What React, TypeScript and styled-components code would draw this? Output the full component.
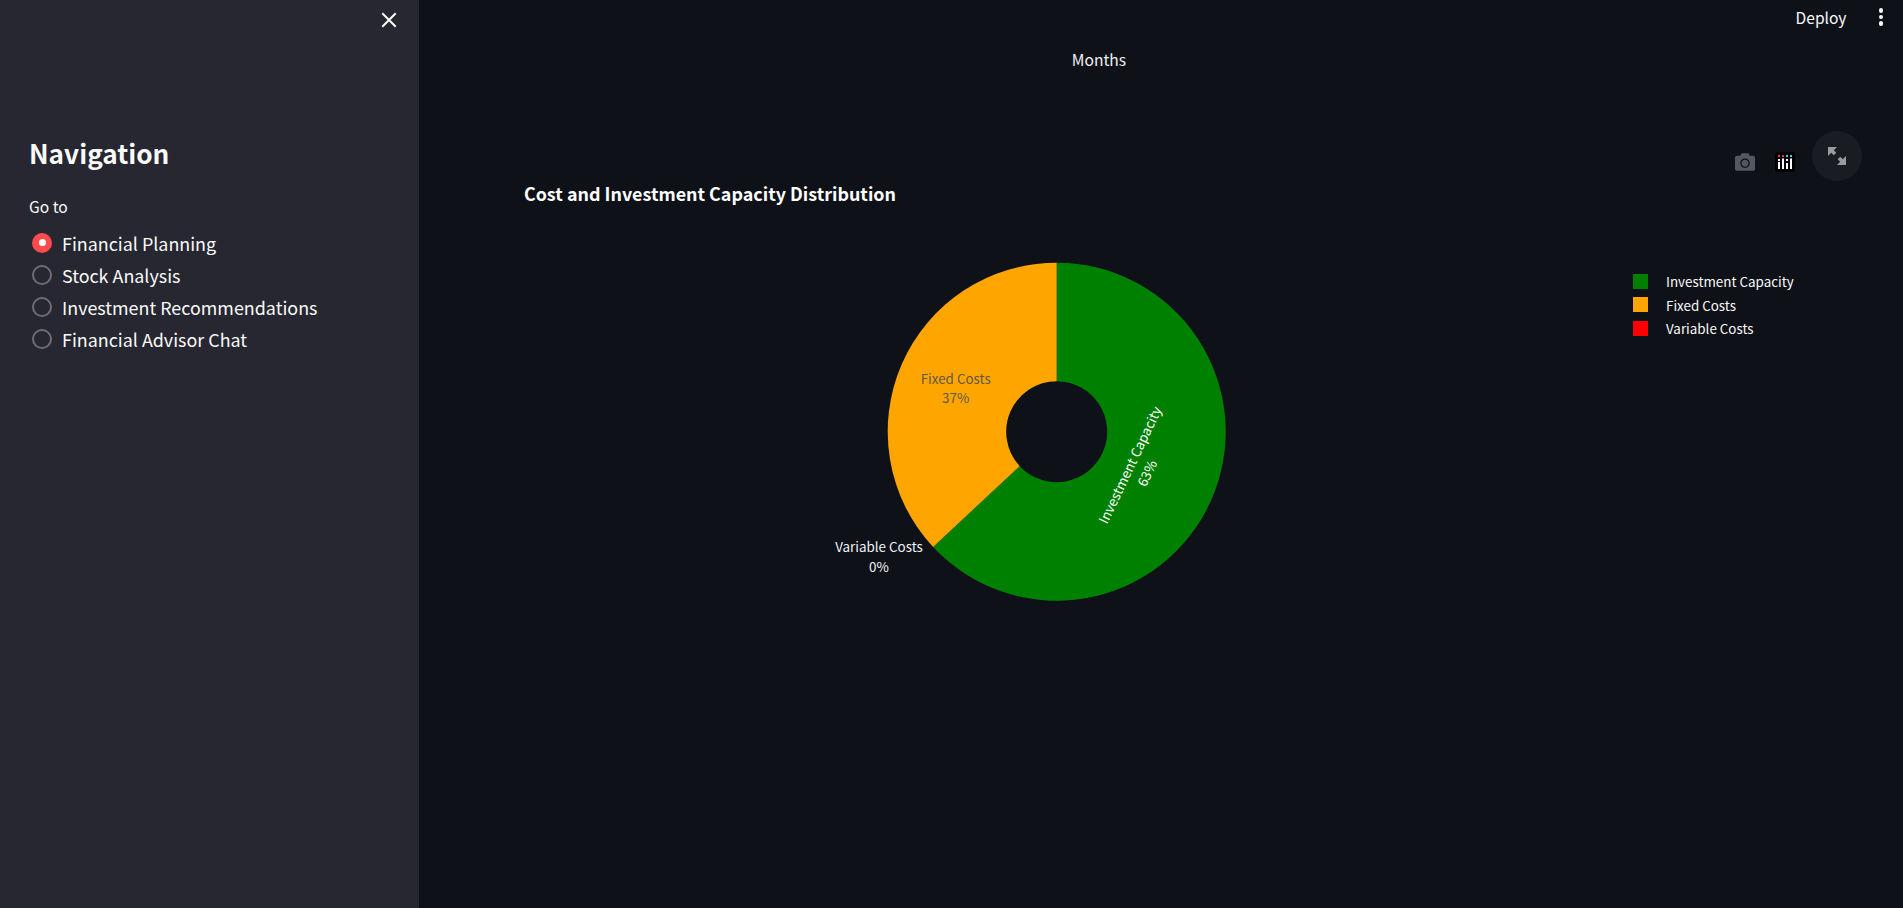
import * as React from "react";
import { FaCamera } from "react-icons/fa";
import styled, { createGlobalStyle } from "styled-components";

const fontStack = '"Noto Sans CJK SC", "Noto Sans", sans-serif';

const GlobalStyle = createGlobalStyle`
  html, body {
    margin: 0;
    height: 100%;
    background: #0e1117;
    overflow: hidden;
  }
`;

const Page = styled.div`
  display: flex;
  width: 1903px;
  height: 908px;
  background: #0e1117;
  color: #fafafa;
  font-family: ${fontStack};
`;

const Sidebar = styled.aside`
  width: 419px;
  flex: none;
  box-sizing: border-box;
  padding: 0 29px;
  background: #262730;
`;

const CloseRow = styled.div`
  display: flex;
  justify-content: flex-end;
  height: 119px;
  padding: 10px 0 0;
  margin-right: -9px;
`;

const Heading = styled.h2`
  margin: 0 0 18px;
  font-size: 26.2px;
  line-height: 48px;
  font-weight: 600;
`;

const GroupLabel = styled.div`
  font-size: 15.6px;
  line-height: 22px;
  margin-bottom: 12px;
`;

const RadioGroup = styled.div`
  display: flex;
  flex-direction: column;
  gap: 4px;
`;

const RadioRow = styled.label`
  display: flex;
  align-items: center;
  gap: 10px;
  height: 28px;
  padding-left: 3px;
  font-size: 17.9px;
  line-height: 28px;
`;

const RadioDot = styled.span<{ $checked: boolean }>`
  display: flex;
  align-items: center;
  justify-content: center;
  box-sizing: border-box;
  width: 20px;
  height: 20px;
  border-radius: 50%;
  border: ${(p) => (p.$checked ? "none" : "2px solid #6c6d75")};
  background: ${(p) => (p.$checked ? "#ff4b4b" : "transparent")};

  &::after {
    content: "";
    display: ${(p) => (p.$checked ? "block" : "none")};
    width: 7px;
    height: 7px;
    border-radius: 50%;
    background: #fff;
    margin-top: -1px;
  }
`;

const Main = styled.main`
  flex: 1;
  display: flex;
  flex-direction: column;
  min-width: 0;
`;

const Toolbar = styled.header`
  display: flex;
  justify-content: flex-end;
  align-items: center;
  gap: 32px;
  height: 34px;
  padding-right: 20px;
  font-size: 15.6px;
`;

const Kebab = styled.div`
  display: flex;
  flex-direction: column;
  gap: 2px;

  span {
    width: 4.5px;
    height: 4.5px;
    border-radius: 50%;
    background: #fafafa;
  }
`;

const AxisTitle = styled.div`
  text-align: center;
  font-size: 15.6px;
  line-height: 24px;
  margin: 13px 0 1px;
  padding-right: 124px;
  color: #f0f2f6;
`;

const ChartCard = styled.section`
  position: relative;
  padding: 108px 0 0 105px;
`;

const ChartTitle = styled.h3`
  margin: 0;
  font-size: 17.9px;
  line-height: 26px;
  font-weight: 700;
  color: #fff;
`;

const ChartBody = styled.div`
  display: flex;
  align-items: flex-start;
  margin: 50px 0 0 294px;
`;

const ModeBar = styled.div`
  position: absolute;
  top: 59px;
  right: 41px;
  display: flex;
  align-items: flex-start;
  color: #55575c;
`;

const ModeIcons = styled.div`
  display: flex;
  align-items: center;
  gap: 20px;
  margin: 21px 17px 0 0;
`;

const ExpandButton = styled.button`
  display: flex;
  align-items: center;
  justify-content: center;
  width: 50px;
  height: 50px;
  padding: 0;
  border: none;
  border-radius: 50%;
  background: #1a1c24;
`;

const Legend = styled.ul`
  margin: 15px 0 0 335px;
  padding: 0;
  list-style: none;
  display: flex;
  flex-direction: column;
  gap: 3.7px;
  font-size: 13.4px;
`;

const LegendItem = styled.li`
  display: flex;
  align-items: center;
  gap: 18px;
  height: 20px;
  line-height: 20px;
  white-space: nowrap;
`;

const Swatch = styled.span<{ $color: string }>`
  width: 15px;
  height: 15px;
  background: ${(p) => p.$color};
`;

const pages = [
  "Financial Planning",
  "Stock Analysis",
  "Investment Recommendations",
  "Financial Advisor Chat",
];

const legend = [
  { label: "Investment Capacity", color: "#008000" },
  { label: "Fixed Costs", color: "#ffa500" },
  { label: "Variable Costs", color: "#ff0000" },
];

// pie centre and radii, in the svg's own pixels
const cx = 238.7;
const cy = 175.7;
const outer = 169;
const inner = 50.5;
const greenShare = 0.6306;

const polar = (r: number, share: number) => {
  const a = share * 2 * Math.PI;
  return `${(cx + r * Math.sin(a)).toFixed(2)} ${(cy - r * Math.cos(a)).toFixed(2)}`;
};

const slice = (from: number, to: number) => {
  const large = to - from > 0.5 ? 1 : 0;
  return [
    `M${polar(inner, from)}`,
    `L${polar(outer, from)}`,
    `A${outer} ${outer} 0 ${large} 1 ${polar(outer, to)}`,
    `L${polar(inner, to)}`,
    `A${inner} ${inner} 0 ${large} 0 ${polar(inner, from)}`,
    "Z",
  ].join(" ");
};

const Pie = () => (
  <svg width="480" height="360" viewBox="0 0 480 360" fontFamily={fontStack} fontSize="13.4">
    <path d={slice(0, greenShare)} fill="#008000" />
    <path d={slice(greenShare, 1)} fill="#ffa500" />
    <g fill="#5f5a45" textAnchor="middle">
      <text x={cx - 101} y={cy - 48}>Fixed Costs</text>
      <text x={cx - 101} y={cy - 29}>37%</text>
    </g>
    <g fill="#fff" textAnchor="middle" transform={`translate(${cx + 73.3} ${cy + 33.3}) rotate(-64.5)`}>
      <text x="0" y="5">Investment Capacity</text>
      <text x="0" y="24">63%</text>
    </g>
    <g fill="#f0f2f6" textAnchor="middle">
      <text x={cx - 177.7} y={cy + 120}>Variable Costs</text>
      <text x={cx - 177.7} y={cy + 140}>0%</text>
    </g>
  </svg>
);

const DataIcon = () => (
  <svg width="20" height="20" viewBox="0 0 20 20">
    <rect width="20" height="20" rx="3" fill="#000" />
    <g fill="#ef2b7b">
      <rect x="3" y="3" width="2" height="2" />
      <rect x="7" y="3" width="2" height="2" />
    </g>
    <g fill="#58c4dc">
      <rect x="11" y="3" width="2" height="2" />
      <rect x="15" y="3" width="2" height="2" />
    </g>
    <g fill="#fff">
      <rect x="3" y="10" width="2" height="7" />
      <rect x="3" y="7" width="2" height="2" />
      <rect x="7" y="6.5" width="2" height="10.5" />
      <rect x="11" y="11" width="2" height="6" />
      <rect x="11" y="7" width="2" height="2" />
      <rect x="15" y="6.5" width="2" height="10.5" />
    </g>
  </svg>
);

const ExpandIcon = () => (
  <svg width="18" height="18" viewBox="0 0 18 18" fill="#9a9b9e">
    <path d="M0 0h9L5.8 3.2l2.5 2.5-2.6 2.6-2.5-2.5L0 9z" />
    <path d="M18 18H9l3.2-3.2-2.5-2.5 2.6-2.6 2.5 2.5L18 9z" />
  </svg>
);

const CloseIcon = () => (
  <svg width="20" height="20" viewBox="0 0 20 20" stroke="#fafafa" strokeWidth="2" strokeLinecap="square">
    <path d="M4 4l12 12M16 4L4 16" />
  </svg>
);

export default function App() {
  return (
    <Page>
      <GlobalStyle />
      <Sidebar>
        <CloseRow>
          <CloseIcon />
        </CloseRow>
        <Heading>Navigation</Heading>
        <GroupLabel>Go to</GroupLabel>
        <RadioGroup>
          {pages.map((name, i) => (
            <RadioRow key={name}>
              <RadioDot $checked={i === 0} />
              {name}
            </RadioRow>
          ))}
        </RadioGroup>
      </Sidebar>
      <Main>
        <Toolbar>
          <span>Deploy</span>
          <Kebab>
            <span />
            <span />
            <span />
          </Kebab>
        </Toolbar>
        <AxisTitle>Months</AxisTitle>
        <ChartCard>
          <ChartTitle>Cost and Investment Capacity Distribution</ChartTitle>
          <ChartBody>
            <Pie />
            <Legend>
              {legend.map((item) => (
                <LegendItem key={item.label}>
                  <Swatch $color={item.color} />
                  {item.label}
                </LegendItem>
              ))}
            </Legend>
          </ChartBody>
          <ModeBar>
            <ModeIcons>
              <FaCamera size={20} />
              <DataIcon />
            </ModeIcons>
            <ExpandButton>
              <ExpandIcon />
            </ExpandButton>
          </ModeBar>
        </ChartCard>
      </Main>
    </Page>
  );
}
